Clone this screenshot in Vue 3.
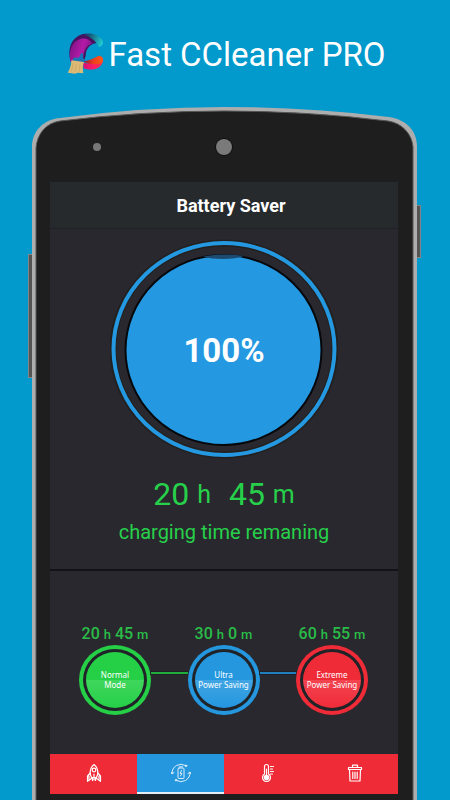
<script setup>
import { ref } from 'vue'

const modes = [
  { key: 'normal', hours: 20, minutes: 45, lines: ['Normal', 'Mode'] },
  { key: 'ultra', hours: 30, minutes: 0, lines: ['Ultra', 'Power Saving'] },
  { key: 'extreme', hours: 60, minutes: 55, lines: ['Extreme', 'Power Saving'] }
]
const selected = ref('normal')
const tabs = [
  { key: 'boost', label: 'Boost' },
  { key: 'battery', label: 'Battery' },
  { key: 'cooler', label: 'Cooler' },
  { key: 'junk', label: 'Junk' }
]
const activeTab = ref('battery')
</script>

<template>
  <main class="page">
    <header class="brand">
      <svg class="logo" viewBox="13 10 114 126" aria-hidden="true">
        <defs>
          <linearGradient id="lg-top" x1="0" y1="0.3" x2="1" y2="0.6">
            <stop offset="0" stop-color="#3d1464" />
            <stop offset="0.35" stop-color="#155f7c" />
            <stop offset="1" stop-color="#1fcbd0" />
          </linearGradient>
          <linearGradient id="lg-left" x1="0" y1="0.3" x2="1" y2="0.7">
            <stop offset="0" stop-color="#7d1487" />
            <stop offset="0.5" stop-color="#b41aa6" />
            <stop offset="1" stop-color="#6c1580" />
          </linearGradient>
          <linearGradient id="lg-bottom" x1="0" y1="0" x2="1" y2="0">
            <stop offset="0" stop-color="#d81070" />
            <stop offset="0.5" stop-color="#f91d6c" />
            <stop offset="1" stop-color="#fb2f48" />
          </linearGradient>
          <linearGradient id="lg-fold" x1="0" y1="0" x2="1" y2="0">
            <stop offset="0" stop-color="#96103c" />
            <stop offset="0.55" stop-color="#f0401c" />
            <stop offset="1" stop-color="#ff5a14" />
          </linearGradient>
        </defs>
        <path d="M27 96C16 58 28 24 62 14C85 10 98 30 110 40C88 40 73 54 72 78L65 100Z" fill="#47125f" />
        <path d="M58 15C78 8 104 10 120 28C128 40 123 50 112 52C100 28 80 17 58 15Z" fill="url(#lg-top)" />
        <path d="M27 96C20 66 28 40 50 30C66 23 84 28 92 42C78 44 68 58 65 80L58 100Z" fill="url(#lg-left)" />
        <path d="M64 98C80 108 98 94 111 82C128 78 127 97 117 108C104 122 82 122 66 116Z" fill="url(#lg-bottom)" />
        <path d="M64 94C86 94 98 82 114 78C124 80 126 92 120 100C104 106 80 106 64 94Z" fill="url(#lg-fold)" />
        <path d="M57 72Q65 66 64 80Q63 88 69 90L67 98L33 94Q34 82 43 84Q55 86 55 78Z" fill="#1677b8" />
        <path d="M29 92L67 97Q61 112 65 131L48 129L41 132L18 129Q29 112 29 92Z" fill="#dcbb76" />
        <path d="M35 100L29 126M44 102L40 126M55 104L52 126" stroke="#bd9b58" stroke-width="1.500" fill="none" />
      </svg>
      <h1>Fast CCleaner PRO</h1>
    </header>

    <section class="phone">
      <svg class="shell" viewBox="0 0 385 693" preserveAspectRatio="none" aria-hidden="true">
        <path d="M0 700V40C0 24 12 12 28 11Q110 0 192 0Q275 0 357 10C373 12 385 23 385 39V700Z" fill="#adadad" />
        <path d="M4 700V41C5 27 14 16 28 14Q110 4 192 4Q275 4 356 14C370 16 380 27 381 40V700Z" fill="#1e1e1e" stroke="#565656" stroke-width="1" />
      </svg>
      <span class="key volume"></span>
      <span class="key power"></span>

      <div class="sensors">
        <span class="proximity"></span>
        <span class="camera"></span>
      </div>

      <div class="screen">
        <h2 class="app-bar">Battery Saver</h2>

        <section class="status">
          <div class="gauge">
            <svg viewBox="0 0 228 220" aria-hidden="true">
              <ellipse cx="114" cy="110" rx="111" ry="106" fill="none" stroke="#222120" stroke-width="7" />
              <ellipse cx="114" cy="110" rx="110.500" ry="106" fill="none" stroke="#2498e0" stroke-width="4" />
              <ellipse cx="113.500" cy="111" rx="98" ry="95" fill="#2498e0" stroke="#06080c" stroke-width="2" />
              <path d="M93 17.500Q113 14 134 17Q126 20 113 20Q101 20 93 17.500Z" fill="#1d4b70" />
            </svg>
            <strong>100%</strong>
          </div>
          <p class="time">20 <small>h</small><span class="minutes">45 <small>m</small></span></p>
          <p class="caption">charging time remaning</p>
        </section>

        <section class="modes">
          <template v-for="(mode, i) in modes" :key="mode.key">
            <span v-if="i" class="link" :class="'after-' + modes[i - 1].key"></span>
            <div class="mode" :class="mode.key">
              <p>{{ mode.hours }} <small>h</small> {{ mode.minutes }} <small>m</small></p>
              <button type="button" :aria-pressed="selected === mode.key" @click="selected = mode.key">
                <span class="disc">
                  <span v-for="line in mode.lines" :key="line">{{ line }}</span>
                </span>
              </button>
            </div>
          </template>
        </section>

        <nav class="tabs">
          <button
            v-for="tab in tabs"
            :key="tab.key"
            type="button"
            :aria-label="tab.label"
            :class="{ active: activeTab === tab.key }"
            @click="activeTab = tab.key"
          >
            <svg v-if="tab.key === 'boost'" viewBox="0 0 20 20">
              <path d="M10 1.500C7 4 5.800 7 6.200 11L7.500 14.500H12.500L13.800 11C14.200 7 13 4 10 1.500Z" />
              <circle cx="10" cy="7" r="1.800" />
              <path d="M6.200 10L3.500 13V18.300L7.500 15.500M13.800 10L16.500 13V18.300L12.500 15.500M8.500 14.500V17.500M11.500 14.500V17.500M10 11V17M5 13V16M15 13V16" />
            </svg>
            <svg v-else-if="tab.key === 'battery'" class="soft" viewBox="0 0 20 20">
              <path d="M1 10.500A9 9 0 0 1 14.500 2.500M19 9.500A9 9 0 0 1 5.500 17.500M0 9L1 11L3 9.500M20 11L19 9L17 10.500" />
              <circle cx="15" cy="2.800" r="0.800" fill="#fff" />
              <circle cx="5" cy="17.200" r="0.800" fill="#fff" />
              <rect x="7" y="5" width="6" height="10.500" rx="1" />
              <path d="M8.500 3.800H11.500M10.500 7.500L9 10.300H11L9.500 13" />
            </svg>
            <svg v-else-if="tab.key === 'cooler'" viewBox="0 0 20 20">
              <path d="M6.500 11V3.500A2 2 0 0 1 10.500 3.500V11A4 4 0 1 1 6.500 11Z" />
              <circle cx="8.500" cy="14.500" r="2.200" fill="#fff" />
              <path d="M8.500 6V14M12.500 3.500H15.500M12.500 6H14.500M12.500 8.500H15.500M12.500 11H14.500" />
            </svg>
            <svg v-else viewBox="0 0 20 20">
              <path d="M3.500 4.500H16.500V6.500H3.500ZM7.500 4.500V2.200H12.500V4.500M4.500 6.500L5 18H15L15.500 6.500M7.800 9V15.500M10 9V15.500M12.200 9V15.500" />
            </svg>
          </button>
        </nav>
      </div>
    </section>
  </main>
</template>

<style>
body {
  margin: 0;
  background: #0299cd;
}
</style>

<style scoped>
.page {
  display: flex;
  flex-direction: column;
  min-height: 100vh;
  overflow: hidden;
  background: #0299cd;
  font-family: Roboto, "Liberation Sans", sans-serif;
}

h1,
h2,
p {
  margin: 0;
  font-weight: 400;
}

button {
  border: 0;
  padding: 0;
  font: inherit;
  color: #fff;
  cursor: pointer;
}

.brand {
  display: flex;
  justify-content: center;
  align-items: center;
  gap: 4px;
  height: 107px;
  padding-left: 2px;
  color: #fff;
}

.brand h1 {
  padding-top: 2px;
  font-size: 33px;
  line-height: 40px;
}

.logo {
  width: 38px;
  height: 42px;
}

.phone {
  position: relative;
  display: flex;
  flex-direction: column;
  flex: 1;
  margin: 0 33px 0 32px;
  padding: 0 19px 6px 18px;
}

.shell {
  position: absolute;
  inset: 0;
  width: 100%;
  height: 100%;
}

.key {
  position: absolute;
  width: 3px;
  background: #545454;
  border: 1px solid #858585;
}

.volume {
  left: -4px;
  top: 147px;
  height: 122px;
  border-right: 0;
}

.power {
  right: -4px;
  top: 98px;
  height: 51px;
  border-left: 0;
}

.sensors {
  position: relative;
  display: grid;
  grid-template-columns: 1fr 16px 1fr;
  align-items: center;
  height: 75px;
  padding-top: 4px;
  box-sizing: border-box;
}

.proximity {
  justify-self: start;
  width: 8px;
  height: 8px;
  margin-left: 43px;
  border-radius: 50%;
  background: #777;
}

.camera {
  width: 16px;
  height: 16px;
  border-radius: 50%;
  background: #7a7a7a;
  box-shadow: 0 0 0 1px #111;
}

.screen {
  position: relative;
  display: flex;
  flex-direction: column;
  flex: 1;
  background: #29282e;
}

.app-bar {
  height: 46px;
  padding-left: 14px;
  border-bottom: 1px solid #202126;
  background: #262a2d;
  color: #fff;
  font-size: 18px;
  line-height: 48px;
  font-weight: 700;
  text-align: center;
}

.status {
  display: flex;
  flex-direction: column;
  align-items: center;
  padding: 10px 0 25px;
  border-bottom: 2px solid #121217;
  color: #27d04a;
}

.gauge {
  display: grid;
  place-items: center;
}

.gauge > * {
  grid-area: 1 / 1;
}

.gauge svg {
  width: 228px;
  height: 220px;
}

.gauge strong {
  padding-top: 4px;
  color: #fff;
  font-size: 33px;
  line-height: 40px;
}

.time {
  margin-top: 15px;
  font-size: 32px;
  line-height: 40px;
}

.time small {
  font-size: 25px;
  vertical-align: 2px;
}

.minutes {
  margin-left: 18px;
}

.caption {
  margin-top: 5px;
  font-size: 20px;
  line-height: 24px;
}

.modes {
  display: grid;
  grid-template-columns: 72px 1fr 72px 1fr 72px;
  align-items: end;
  flex: 1;
  padding: 0 30px 38px 29px;
}

.mode {
  display: flex;
  flex-direction: column;
  align-items: center;
}

.mode p {
  color: #29bd48;
  font-size: 16px;
  line-height: 20px;
  font-weight: 500;
  white-space: nowrap;
}

.mode small {
  font-size: 13px;
}

.mode button {
  width: 72px;
  height: 70px;
  padding: 4px;
  border-radius: 50%;
  background: var(--tone);
}

.disc {
  display: flex;
  flex-direction: column;
  align-items: center;
  justify-content: center;
  box-sizing: border-box;
  height: 100%;
  border: 3px solid #202429;
  border-radius: 50%;
  background: linear-gradient(var(--tone) 50%, var(--shine) 50%, var(--tone));
  font-family: "Noto Sans", "Open Sans", sans-serif;
  font-size: 8px;
  line-height: 10px;
  white-space: nowrap;
}

.normal {
  --tone: #25d047;
  --shine: #40d65d;
}

.ultra {
  --tone: #2497df;
  --shine: #40a5e3;
}

.extreme {
  --tone: #f02b38;
  --shine: #f34450;
}

.link {
  height: 2px;
  margin-bottom: 41px;
  box-shadow: 0 0 0 1px #202027;
}

.after-normal {
  background: #20ad3d;
}

.after-ultra {
  background: #217fbd;
}

.tabs {
  display: grid;
  grid-template-columns: repeat(4, 1fr);
  height: 40px;
  border-top: 1px solid #202a30;
}

.tabs button {
  display: grid;
  place-items: center;
  background: #ef2b37;
  border-bottom: 2px solid #ef2b37;
}

.tabs button.active {
  background: #2497df;
  border-bottom-color: #e6eef5;
}

.tabs svg {
  width: 20px;
  height: 20px;
  fill: none;
  stroke: #fff;
  stroke-width: 1.2;
  stroke-linecap: round;
  stroke-linejoin: round;
}

.tabs .soft {
  stroke-width: 1;
  opacity: 0.85;
}
</style>
